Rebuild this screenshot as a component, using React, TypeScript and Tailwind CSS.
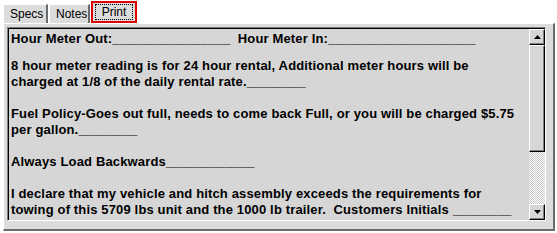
import React from 'react'

const tabs = [
  { label: 'Specs', w: 'w-[45px]' },
  { label: 'Notes', w: 'w-[41px]' },
  { label: 'Print', w: 'w-[46px]' },
]

const lines: (string | null)[] = [
  'Hour Meter Out:________________  Hour Meter In:____________________',
  null,
  '8 hour meter reading is for 24 hour rental, Additional meter hours will be',
  'charged at 1/8 of the daily rental rate.________',
  null,
  'Fuel Policy-Goes out full, needs to come back Full, or you will be charged $5.75',
  'per gallon.________',
  null,
  'Always Load Backwards____________',
  null,
  'I declare that my vehicle and hitch assembly exceeds the requirements for',
  'towing of this 5709 lbs unit and the 1000 lb trailer.  Customers Initials ________',
]

function ArrowButton({ dir }: { dir: 'up' | 'down' }) {
  return (
    <div className="h-[16px] w-[16px] flex items-center justify-center bg-[#d6d6d6] border-t border-l border-t-white border-l-white border-r border-b border-r-black border-b-black shadow-[inset_-1px_-1px_0_#808080]">
      <svg width="7" height="4" viewBox="0 0 7 4">
        {dir === 'up' ? <polygon points="3.5,0 7,4 0,4" fill="#000" /> : <polygon points="0,0 7,0 3.5,4" fill="#000" />}
      </svg>
    </div>
  )
}

export default function App() {
  return (
    <div className="w-[557px] h-[233px] bg-white font-['Liberation_Sans',sans-serif] text-black overflow-hidden">
      {/* tab strip */}
      <div className="flex items-end h-[23px] pl-[3px]">
        {tabs.map((t) =>
          t.label === 'Print' ? (
            <div key={t.label} className={`${t.w} h-[22px] px-[2px] pt-[1px] border-2 border-[#e00000] bg-[#dcdcdc]`}>
              <div className="text-center text-[12px] leading-[14px] border border-dotted border-black">{t.label}</div>
            </div>
          ) : (
            <div
              key={t.label}
              className={`${t.w} h-[19px] pl-[6px] pt-[2px] mr-[1px] text-[12px] leading-[14px] bg-[#dcdcdc] border-t border-l border-white border-r-2 border-r-[#6b6b6b]`}
            >
              {t.label}
            </div>
          )
        )}
      </div>

      {/* panel */}
      <div className="ml-[3px] mr-[2px] h-[208px] bg-[#dcdcdc] border-l border-t border-white border-r-2 border-b-2 border-r-[#6b6b6b] border-b-[#6b6b6b] pl-[3px] pr-[7px] pt-[3px] pb-[8px]">
        <div className="h-full flex bg-[#d6d6d6] border-l border-t border-l-[#808080] border-t-[#808080] border-r border-b border-r-white border-b-white">
          <div className="flex-1 h-full border-l border-t border-black pl-[2px] pt-[2px] overflow-hidden">
            {lines.map((l, i) =>
              l === null ? (
                <div key={i} className={i === 1 ? 'h-[11px]' : 'h-[16px]'} />
              ) : (
                <div key={i} className="whitespace-pre text-[13px] leading-[16px] font-bold tracking-[0.15px]">
                  {l}
                </div>
              )
            )}
          </div>
          <div className="w-[16px] h-full flex flex-col border-t border-black">
            <ArrowButton dir="up" />
            <div className="h-[107px] bg-[#d6d6d6] border-t border-l border-white border-r border-b border-r-black border-b-black shadow-[inset_-1px_-1px_0_#808080]" />
            <div className="flex-1 bg-[repeating-conic-gradient(#c8c8c8_0_25%,#ffffff_0_50%)] bg-[length:2px_2px]" />
            <ArrowButton dir="down" />
          </div>
        </div>
      </div>
    </div>
  )
}
